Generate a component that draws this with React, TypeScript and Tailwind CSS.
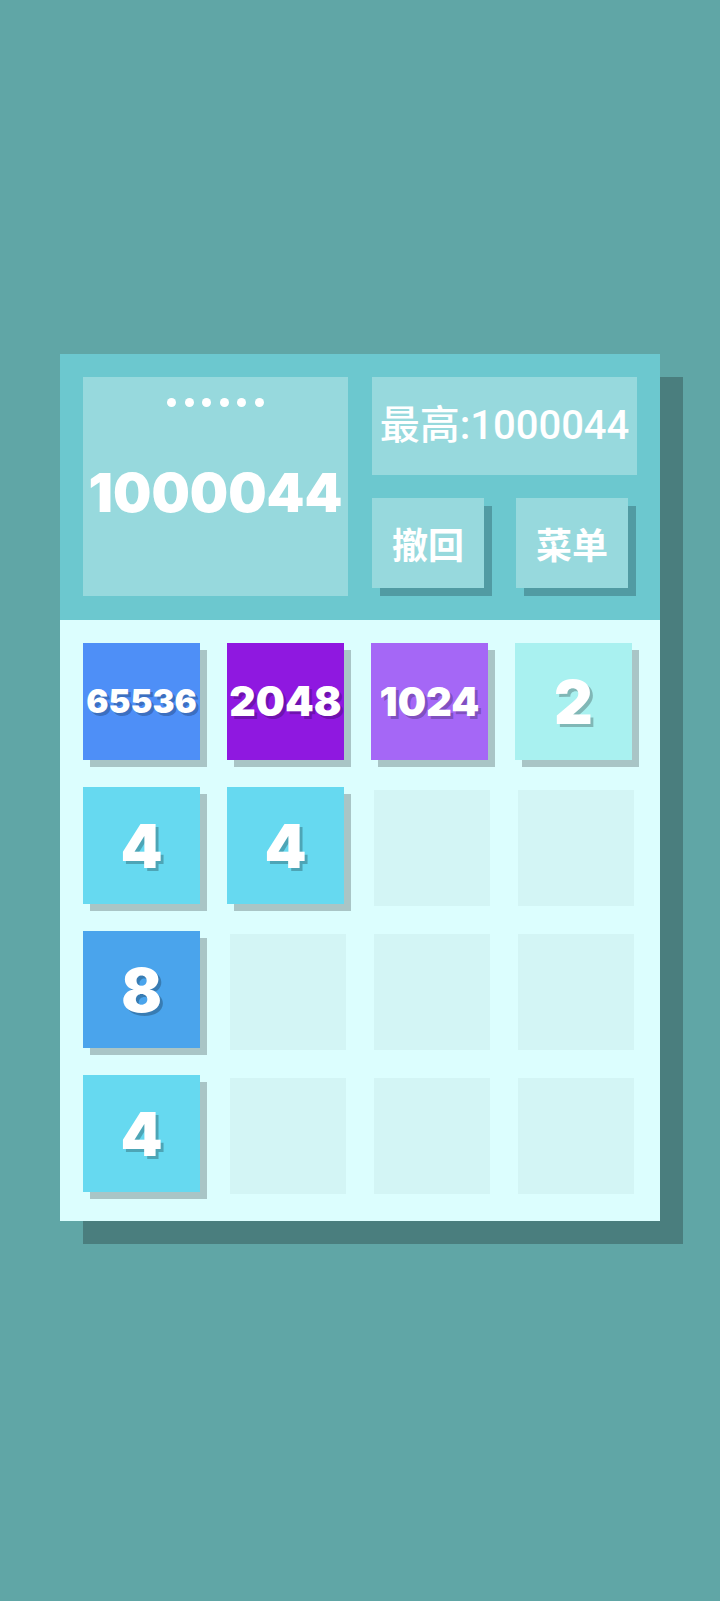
const board: (number | null)[][] = [
  [65536, 2048, 1024, 2],
  [4, 4, null, null],
  [8, null, null, null],
  [4, null, null, null],
];

const tileStyles: Record<number, string> = {
  2: 'bg-[#a9f1f0] text-[60px]',
  4: 'bg-[#66d9f0] text-[60px]',
  8: 'bg-[#4aa4ec] text-[60px]',
  1024: 'bg-[#a567f6] text-[40px]',
  2048: 'bg-[#8f18e0] text-[41px]',
  65536: 'bg-[#4e8ff7] text-[33px]',
};

function Cell({ value }: { value: number | null }) {
  if (value === null) {
    return <div className="w-[116px] h-[116px] bg-[#d3f5f5]" />;
  }
  return (
    <div className="w-[116px] h-[116px]">
      <div
        className={`w-[117px] h-[117px] -translate-x-[3px] -translate-y-[3px] flex items-center justify-center text-white font-black leading-none [box-shadow:7px_7px_0_#a9c5c6] [text-shadow:3px_3px_0_rgba(0,0,0,0.24)] ${tileStyles[value]}`}
      >
        {value}
      </div>
    </div>
  );
}

export default function App() {
  return (
    <div className="min-h-screen h-[1601px] bg-[#60a6a6] pt-[354px] pl-[60px] font-['Inter','Noto_Sans_CJK_SC',sans-serif]">
      <div className="w-[600px] [box-shadow:23px_23px_0_#4a7e7e]">
        {/* Header */}
        <div className="bg-[#6cc8cf] h-[266px] flex gap-[24px] p-[23px]">
          <div className="w-[265px] h-[219px] bg-[#97d9dd] flex flex-col items-center pt-[21px]">
            <div className="flex gap-[8.6px]">
              {[0, 1, 2, 3, 4, 5].map((i) => (
                <span key={i} className="w-[9px] h-[9px] rounded-full bg-white" />
              ))}
            </div>
            <div className="mt-[59px] text-white font-black text-[54px] leading-none">1000044</div>
          </div>
          <div className="w-[265px] flex flex-col">
            <div className="h-[98px] bg-[#97d9dd] flex items-center justify-center text-white text-[40px] font-medium leading-none font-['Roboto','Noto_Sans_CJK_SC',sans-serif]">
              最高:1000044
            </div>
            <div className="mt-[23px] flex gap-[32px]">
              <button className="w-[112px] h-[90px] bg-[#97d9dd] [box-shadow:8px_8px_0_#519ba3] text-white text-[36px] font-bold font-['Noto_Sans_CJK_SC',sans-serif] flex items-center justify-center">
                撤回
              </button>
              <button className="w-[112px] h-[90px] bg-[#97d9dd] [box-shadow:8px_8px_0_#519ba3] text-white text-[36px] font-bold font-['Noto_Sans_CJK_SC',sans-serif] flex items-center justify-center">
                菜单
              </button>
            </div>
          </div>
        </div>

        {/* Board */}
        <div className="bg-[#dcfefe] h-[601px] p-[26px] grid grid-cols-4 gap-[28px] content-start">
          {board.flat().map((v, i) => (
            <Cell key={i} value={v} />
          ))}
        </div>
      </div>
    </div>
  );
}
